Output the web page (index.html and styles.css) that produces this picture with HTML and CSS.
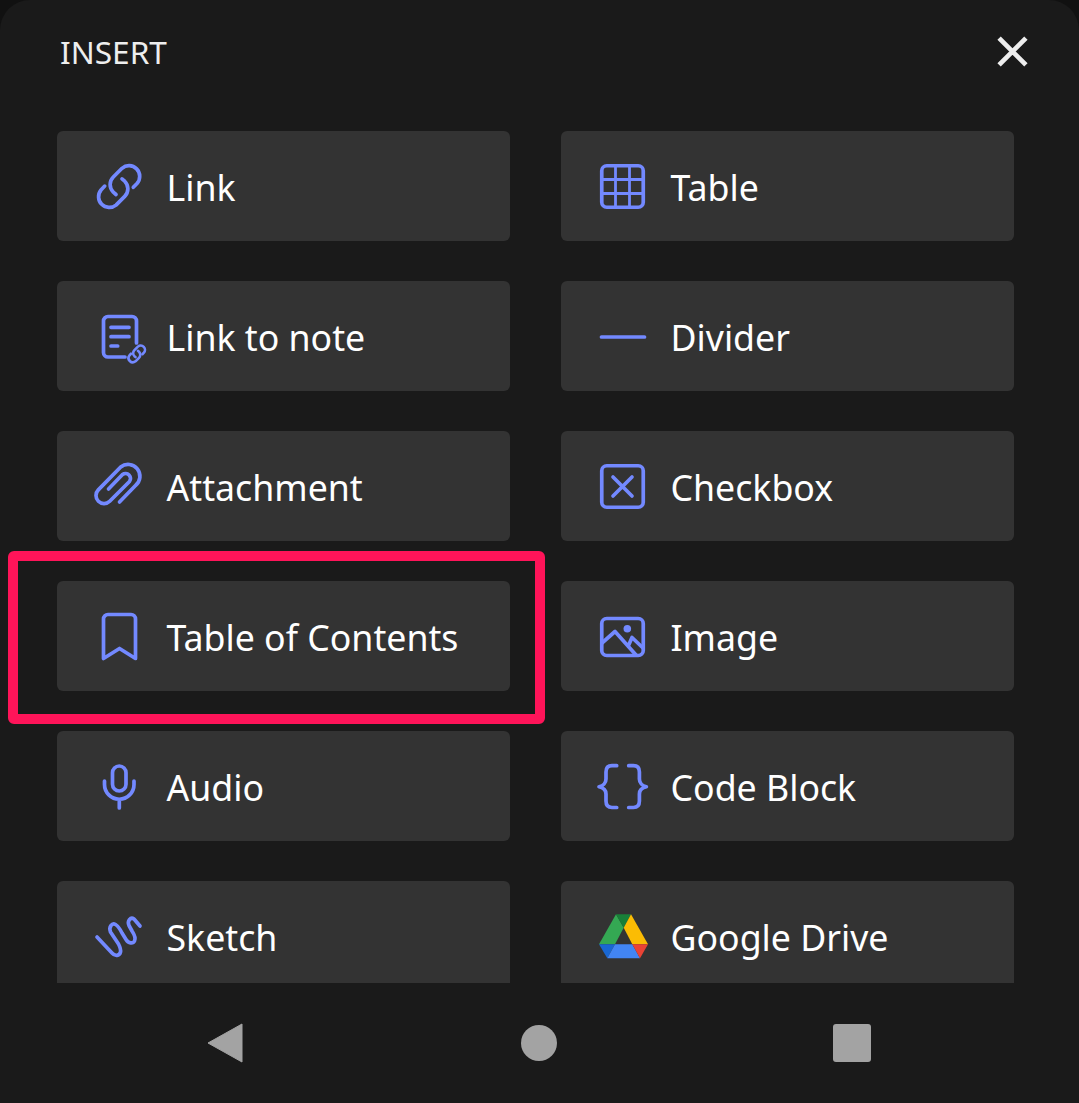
FILE: index.html

```html
<!doctype html>
<html lang="en">
	<head>
		<title>Insert</title>
		<meta charset="utf-8">
		<link rel="stylesheet" href="styles.css">
	</head>
	<body>
<div class="sheet">
	<div class="header">
		<span class="title">INSERT</span>
		<svg class="close" viewBox="0 0 32 32"><path d="M3 3 L29 29 M29 3 L3 29"/></svg>
	</div>

	<div class="list">
		<div class="item">
			<svg class="icon" viewBox="0 0 48 48"><path d="M38.3 25.3 L42 21.5 A10.7 10.7 0 0 0 27 6.3 L18.3 15 A10.7 10.7 0 0 0 18.3 30.2 L21 32.5"/><path d="M9.7 24.1 L6 28 A10.7 10.7 0 0 0 21 43.1 L29.7 34.4 A10.7 10.7 0 0 0 29.7 19.2 L27 16.9"/></svg>
			<span>Link</span>
		</div>
		<div class="item">
			<svg class="icon" viewBox="0 0 48 48"><rect x="2.75" y="3.75" width="41.5" height="41.5" rx="5"/><path class="thin" d="M16.5 4 V45 M30.5 4 V45 M3 17.5 H44 M3 31.5 H44"/></svg>
			<span>Table</span>
		</div>

		<div class="item">
			<svg class="icon" viewBox="0 0 48 48"><path d="M30 45 H13 A4.5 4.5 0 0 1 8.5 40.5 V9 A4.5 4.5 0 0 1 13 4.5 H37 A4.5 4.5 0 0 1 41.5 9 V31"/><path d="M16 15.3 H34 M16 24.7 H34 M16 34 H22.7"/><g transform="translate(32.1 32.1) scale(.4)" stroke-width="6.5"><path d="M38.3 25.3 L42 21.5 A10.7 10.7 0 0 0 27 6.3 L18.3 15 A10.7 10.7 0 0 0 18.3 30.2 L21 32.5"/><path d="M9.7 24.1 L6 28 A10.7 10.7 0 0 0 21 43.1 L29.7 34.4 A10.7 10.7 0 0 0 29.7 19.2 L27 16.9"/></g></svg>
			<span>Link to note</span>
		</div>
		<div class="item">
			<svg class="icon" viewBox="0 0 48 48"><path d="M2.5 25 H45.5"/></svg>
			<span>Divider</span>
		</div>

		<div class="item">
			<svg class="icon" viewBox="0 0 48 48"><path d="M24.5 40 L40.5 23.5 A10.5 10.5 0 0 0 25.7 5 L3.3 27.9 A8 8 0 0 0 14.7 39.2 L34.5 19.5 A5 5 0 0 0 27.5 12.5 L13.5 27"/></svg>
			<span>Attachment</span>
		</div>
		<div class="item">
			<svg class="icon" viewBox="0 0 48 48"><rect x="2.75" y="3.75" width="41.5" height="41.5" rx="5"/><path d="M14 15 L33 34 M33 15 L14 34"/></svg>
			<span>Checkbox</span>
		</div>

		<div class="item">
			<div class="highlight"></div>
			<svg class="icon" viewBox="0 0 48 48"><path d="M8.5 46.5 V7 A4.5 4.5 0 0 1 13 2.5 H36 A4.5 4.5 0 0 1 40.5 7 V46.5 L24.5 36.5 Z"/></svg>
			<span>Table of Contents</span>
		</div>
		<div class="item">
			<svg class="icon" viewBox="0 0 48 48"><rect x="2.75" y="6.5" width="41.5" height="37" rx="5"/><circle class="solid" cx="28.3" cy="16.7" r="3.8"/><path d="M3 31 L16 19.5 L37 43 M29.5 33.5 L33 25.5 L44 36"/></svg>
			<span>Image</span>
		</div>

		<div class="item">
			<svg class="icon" viewBox="0 0 48 48"><rect x="17.5" y="4" width="13.5" height="25" rx="6.75"/><path d="M9.5 19 V22.5 A14.75 14.75 0 0 0 39 22.5 V19 M24.3 37.5 V46"/></svg>
			<span>Audio</span>
		</div>
		<div class="item">
			<svg class="icon" viewBox="0 0 48 48"><path d="M17.7 3.7 H13 C8.5 3.7 7 6 7 10 V17 C7 21 4 24 0 24.7 C4 25.5 7 28 7 32 V39 C7 43 8.5 45.5 13 45.5 H17.7"/><path d="M29.7 3.7 H34.4 C38.9 3.7 40.4 6 40.4 10 V17 C40.4 21 43.4 24 47.4 24.7 C43.4 25.5 40.4 28 40.4 32 V39 C40.4 43 38.9 45.5 34.4 45.5 H29.7"/></svg>
			<span>Code Block</span>
		</div>

		<div class="item">
			<svg class="icon" viewBox="0 0 48 48"><path d="M2 25 L17 41 C20 44.5 24.5 44 25.5 40 C26 37.5 25 35 23.5 32 L15.5 20 C13.5 15 17 10.5 20.5 12.5 C23 14 25 17 27 21 L31 27.5 C33.5 31.5 38 32 39.5 29 C41 26 39 22 37 19 L34 13.5 C32 9 35.5 4.5 39 7 L45 14"/></svg>
			<span>Sketch</span>
		</div>
		<div class="item">
			<svg class="drive" viewBox="0 0 48 48">
				<polygon fill="#34a853" points="17,2.3 24.7,15.7 16,32.3 0,32.3"/>
				<polygon fill="#188038" points="17,2.3 32,2.3 24.7,15.7"/>
				<polygon fill="#fbbc04" points="32,2.3 49,32.3 33.3,32.3 24.7,15.7"/>
				<polygon fill="#1967d2" points="0,32.3 16,32.3 8.3,46.3"/>
				<polygon fill="#4285f4" points="16,32.3 33.3,32.3 41,46.3 8.3,46.3"/>
				<polygon fill="#ea4335" points="33.3,32.3 49,32.3 41,46.3"/>
			</svg>
			<span>Google Drive</span>
		</div>
	</div>

	<div class="nav">
		<svg class="nav-back" viewBox="0 0 36 40"><path d="M34 1 L0 20 L34 39 Z"/></svg>
		<div class="nav-home"></div>
		<div class="nav-recent"></div>
	</div>
</div>
	</body>
</html>
```

FILE: styles.css

```css
* {
	box-sizing: border-box;
}
html, body {
	height: 100%;
}
body {
	margin: 0;
	background-color: #111111;
	color: #ffffff;
	font-family: "Noto Sans", sans-serif;
	overflow: hidden;
}

.sheet {
	display: flex;
	flex-direction: column;
	height: 100%;
	background-color: #1a1a1a;
	border-radius: 30px 30px 0 0;
}

.header {
	display: flex;
	align-items: center;
	justify-content: space-between;
	height: 131px;
	padding: 0 50px 29px 60px;
	flex-shrink: 0;
}
.title {
	font-size: 31.6px;
	color: #eeeeee;
}
.close {
	width: 33px;
	height: 33px;
	fill: none;
	stroke: #eeeeee;
	stroke-width: 4.6;
}

.list {
	flex: 1;
	overflow: hidden;
	display: grid;
	grid-template-columns: 453px 453px;
	grid-auto-rows: 110px;
	column-gap: 51px;
	row-gap: 40px;
	padding-left: 57px;
}
.item {
	position: relative;
	display: flex;
	align-items: center;
	gap: 23.5px;
	padding-left: 38px;
	background-color: #333333;
	border-radius: 6px;
	font-size: 35.7px;
}
.item span {
	position: relative;
	top: 1px;
}

.icon {
	width: 48px;
	height: 48px;
	flex-shrink: 0;
	fill: none;
	stroke: #7389ff;
	stroke-width: 3.7;
	stroke-linecap: round;
	stroke-linejoin: round;
	overflow: visible;
}
.icon .thin {
	stroke-width: 2.8;
}
.icon .solid {
	fill: #7389ff;
	stroke: none;
}
.drive {
	width: 48px;
	height: 48px;
	flex-shrink: 0;
	overflow: visible;
}

.highlight {
	position: absolute;
	top: -30px;
	right: -35px;
	bottom: -33px;
	left: -49px;
	border: 10px solid #ff1459;
	border-radius: 6px;
}

.nav {
	display: grid;
	grid-template-columns: repeat(3, 1fr);
	justify-items: center;
	align-items: center;
	height: 120px;
	padding: 0 70px 0 69px;
	flex-shrink: 0;
}
.nav-back {
	width: 36px;
	height: 40px;
	fill: #a3a3a3;
	stroke: #a3a3a3;
	stroke-width: 1;
	stroke-linejoin: round;
}
.nav-home {
	width: 36px;
	height: 36px;
	border-radius: 50%;
	background-color: #a3a3a3;
}
.nav-recent {
	width: 38px;
	height: 38px;
	border-radius: 3px;
	background-color: #a3a3a3;
}
```
